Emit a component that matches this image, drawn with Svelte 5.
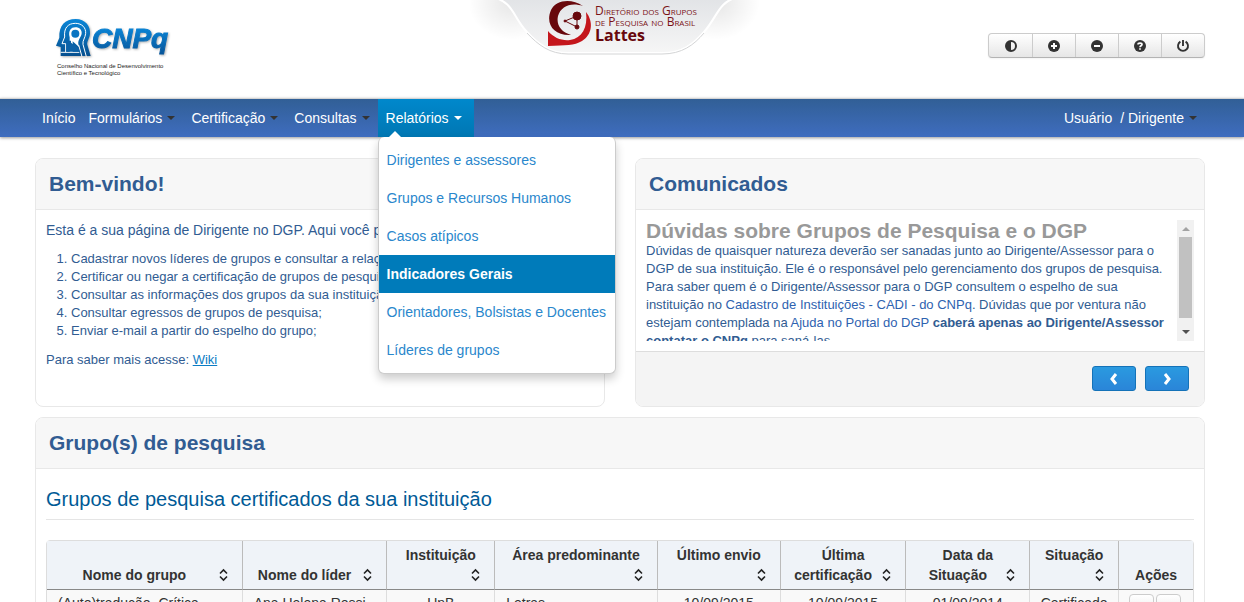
<script lang="ts">
  let openMenu = $state("Relatórios");
  let selected = $state("Indicadores Gerais");

  const menus = ["Formulários", "Certificação", "Consultas", "Relatórios"];

  const reports = [
    "Dirigentes e assessores",
    "Grupos e Recursos Humanos",
    "Casos atípicos",
    "Indicadores Gerais",
    "Orientadores, Bolsistas e Docentes",
    "Líderes de grupos",
  ];

  const tasks = [
    "Cadastrar novos líderes de grupos e consultar a relação de líderes;",
    "Certificar ou negar a certificação de grupos de pesquisa;",
    "Consultar as informações dos grupos da sua instituição;",
    "Consultar egressos de grupos de pesquisa;",
    "Enviar e-mail a partir do espelho do grupo;",
  ];

  const columns = [
    { label: "Nome do grupo", width: 195 },
    { label: "Nome do líder", width: 145 },
    { label: "Instituição", width: 108 },
    { label: "Área predominante", width: 163 },
    { label: "Último envio", width: 123 },
    { label: "Última certificação", width: 126 },
    { label: "Data da Situação", width: 124 },
    { label: "Situação", width: 89 },
  ];

  const tableWidth = 1148;
</script>

<div class="page">
  <header class="top container">
    <a class="cnpq" href="#cnpq" aria-label="CNPq">
      <svg width="136" height="80" viewBox="50 0 136 80">
        <defs>
          <linearGradient id="blue" x1="0" y1="0" x2="0" y2="1">
            <stop offset="0" stop-color="#0a86d8" />
            <stop offset="1" stop-color="#07508f" />
          </linearGradient>
          <linearGradient id="word" gradientUnits="userSpaceOnUse" x1="0" y1="27" x2="0" y2="54">
            <stop offset="0" stop-color="#0a86d8" />
            <stop offset="1" stop-color="#07559a" />
          </linearGradient>
        </defs>
        <g class="shade">
          <g transform="translate(40 0) scale(0.3333)">
            <path
              fill="url(#blue)"
              d="M62 168V141L48 137L58 113C56 77 75 57 107 57C136 57 152 79 150 101C149 115 140 123 142 134L152 168Z"
            />
            <g fill="none" stroke="#fff" stroke-width="3">
              <path d="M77 156V131H66L74 111C71 84 84 70 106 70C127 70 138 84 137 100C136 114 127 121 129 133L139 170" />
              <path d="M62 157H118M116 135L126 170" />
            </g>
            <path fill="#fff" d="M89 156V112C84 92 93 82 106 82C119 82 126 90 125 100C124 112 114 117 115 132L118 142L98 124V156Z" />
            <circle cx="106" cy="101" r="12" fill="#0a75c2" />
            <path fill="#0b62a8" d="M79 122H93V128L116 145L119 155H79Z" />
          </g>
          <text x="92" y="48" class="word">CNPq</text>
        </g>
        <text x="57" y="68" class="tiny">Conselho Nacional de Desenvolvimento</text>
        <text x="57" y="75" class="tiny">Científico e Tecnológico</text>
      </svg>
    </a>

    <a class="lattes" href="#lattes" aria-label="Diretório dos Grupos de Pesquisa no Brasil Lattes">
      <svg width="300" height="70" viewBox="0 0 300 70">
        <defs>
          <linearGradient id="tab" x1="0" y1="0" x2="0" y2="1">
            <stop offset="0" stop-color="#e1e3e6" />
            <stop offset="1" stop-color="#f6f6f6" />
          </linearGradient>
          <radialGradient id="glow">
            <stop offset="0" stop-color="#000" stop-opacity="0.1" />
            <stop offset="1" stop-color="#000" stop-opacity="0" />
          </radialGradient>
        </defs>
        <ellipse cx="42" cy="2" rx="44" ry="38" fill="url(#glow)" />
        <ellipse cx="246" cy="2" rx="44" ry="38" fill="url(#glow)" />
        <path
          d="M22 -3C44 2 42 16 57 32C68 44 80 53 98 53H192C212 53 224 44 234 32C248 16 248 2 268 -3Z"
          fill="url(#tab)"
          stroke="#fff"
          stroke-width="2"
        />
        <path
          d="M57 33C68 45 80 54 98 54H192C212 54 224 45 234 33"
          fill="none"
          stroke="#d4d5d6"
        />
        <path
          fill="#c4161c"
          d="M78 31C84 38 92 41 100 40C112 38 118 28 116 12C124 22 122 35 112 41C104 46 96 45 78 46Z"
        />
        <path
          fill="#68080c"
          d="M113 6C101 -2 86 0 81 10C75 24 84 36 101 35C91 32 86 25 88 16C91 6 101 2 113 6Z"
        />
        <g stroke="#68080c" stroke-width="1">
          <path d="M95 21L107 16L107 27Z" fill="none" />
          <circle cx="107" cy="16" r="4" fill="#68080c" />
          <circle cx="95" cy="21" r="1" fill="#68080c" />
          <circle cx="107" cy="27" r="2" fill="#68080c" />
        </g>
        <text x="125" y="15" class="dir">Diretório dos Grupos</text>
        <text x="125" y="26" class="dir">de Pesquisa no Brasil</text>
        <text x="125" y="41" class="dir-name">Lattes</text>
      </svg>
    </a>

    <div class="tools">
      <button aria-label="Contraste">
        <svg width="14" height="14" viewBox="0 0 14 14">
          <circle cx="7" cy="7" r="5" fill="none" stroke="#333" stroke-width="2" />
          <path d="M7 2A5 5 0 0 0 7 12Z" fill="#333" />
        </svg>
      </button>
      <button aria-label="Aumentar fonte">
        <svg width="14" height="14" viewBox="0 0 14 14">
          <circle cx="7" cy="7" r="6" fill="#333" />
          <path d="M7 4V10M4 7H10" stroke="#fff" stroke-width="2" />
        </svg>
      </button>
      <button aria-label="Diminuir fonte">
        <svg width="14" height="14" viewBox="0 0 14 14">
          <circle cx="7" cy="7" r="6" fill="#333" />
          <path d="M4 7H10" stroke="#fff" stroke-width="2" />
        </svg>
      </button>
      <button aria-label="Ajuda">
        <svg width="14" height="14" viewBox="0 0 14 14">
          <circle cx="7" cy="7" r="6" fill="#333" />
          <path d="M5 5.6C5 3.6 9 3.6 9 5.6C9 6.8 7 6.8 7 8.2M7 9.2V10.8" fill="none" stroke="#fff" stroke-width="1.7" />
        </svg>
      </button>
      <button aria-label="Sair">
        <svg width="14" height="14" viewBox="0 0 14 14">
          <path d="M4.4 2.6A5 5 0 1 0 9.6 2.6M7 1V7" fill="none" stroke="#333" stroke-width="1.9" />
        </svg>
      </button>
    </div>
  </header>

  <nav class="navbar">
    <div class="container bar">
      <a class="home" href="#inicio">Início</a>
      {#each menus as menu}
        <div class="menu">
          <button
            class="menu-btn"
            class:open={openMenu === menu}
            onclick={() => (openMenu = openMenu === menu ? "" : menu)}
          >
            {menu}<span class="caret"></span>
          </button>
          {#if menu === "Relatórios" && openMenu === menu}
            <ul class="dropdown">
              {#each reports as item}
                <li>
                  <a href="#relatorio" class:active={item === selected} onclick={() => (selected = item)}>{item}</a>
                </li>
              {/each}
            </ul>
          {/if}
        </div>
      {/each}
      <div class="user">
        <span>Usuário</span>
        <button class="menu-btn">/ Dirigente<span class="caret"></span></button>
      </div>
    </div>
  </nav>

  <main class="container">
    <div class="row">
      <section class="panel">
        <h2>Bem-vindo!</h2>
        <div class="welcome">
          <p class="lead">Esta é a sua página de Dirigente no DGP. Aqui você poderá:</p>
          <ol>
            {#each tasks as task}
              <li>{task}</li>
            {/each}
          </ol>
          <p>Para saber mais acesse: <a href="#wiki">Wiki</a></p>
        </div>
      </section>

      <section class="panel">
        <h2>Comunicados</h2>
        <div class="news">
          <div class="news-text">
            <h3>Dúvidas sobre Grupos de Pesquisa e o DGP</h3>
            <p>
              Dúvidas de quaisquer natureza deverão ser sanadas junto ao Dirigente/Assessor para o DGP de sua
              instituição. Ele é o responsável pelo gerenciamento dos grupos de pesquisa. Para saber quem é o
              Dirigente/Assessor para o DGP consultem o espelho de sua instituição no
              <a href="#cadi">Cadastro de Instituições - CADI - do CNPq</a>. Dúvidas que por ventura não estejam
              contemplada na <a href="#ajuda">Ajuda no Portal do DGP</a>
              <strong>caberá apenas ao Dirigente/Assessor contatar o CNPq</strong> para saná-las.
            </p>
          </div>
          <div class="scroll" aria-hidden="true">
            <span class="arrow up"></span>
            <span class="thumb"></span>
            <span class="arrow down"></span>
          </div>
        </div>
        <div class="panel-foot">
          <button aria-label="Anterior">
            <svg width="12" height="12" viewBox="0 0 12 12"><path d="M8 1L4 6L8 11" /></svg>
          </button>
          <button aria-label="Próximo">
            <svg width="12" height="12" viewBox="0 0 12 12"><path d="M4 1L8 6L4 11" /></svg>
          </button>
        </div>
      </section>
    </div>

    <section class="panel">
      <h2>Grupo(s) de pesquisa</h2>
      <div class="groups">
        <h3>Grupos de pesquisa certificados da sua instituição</h3>
        <table>
          <colgroup>
            {#each columns as col}
              <col style="width: {(col.width / tableWidth) * 100}%" />
            {/each}
            <col />
          </colgroup>
          <thead>
            <tr>
              {#each columns as col}
                <th>
                  <button class="sort">
                    {col.label}<svg width="9" height="20" viewBox="0 0 9 20">
                      <path d="M1 8.5L4.5 5L8 8.5M1 11.5L4.5 15L8 11.5" />
                    </svg>
                  </button>
                </th>
              {/each}
              <th>Ações</th>
            </tr>
          </thead>
          <tbody>
            <tr>
              <td>(Auto)tradução, Crítica</td>
              <td>Ana Helena Rossi</td>
              <td class="center">UnB</td>
              <td>Letras</td>
              <td class="center">10/09/2015</td>
              <td class="center">10/09/2015</td>
              <td class="center">01/09/2014</td>
              <td class="center">Certificado</td>
              <td class="actions">
                <div>
                  <button aria-label="Visualizar"></button>
                  <button aria-label="Editar"></button>
                </div>
              </td>
            </tr>
          </tbody>
        </table>
      </div>
    </section>
  </main>
</div>

<style>
  :global(html) {
    scrollbar-width: none;
  }

  :global(body) {
    background: #fff;
  }

  .page {
    font-family: "Liberation Sans", Arial, sans-serif;
    font-size: 13px;
    line-height: 18px;
    color: #315c92;
  }

  .page * {
    box-sizing: border-box;
  }

  button {
    font: inherit;
    color: inherit;
    margin: 0;
    padding: 0;
    border: 0;
    background: none;
    cursor: pointer;
  }

  h2,
  h3,
  p {
    margin: 0;
  }

  .container {
    padding: 0 39px 0 35px;
  }

  .top {
    display: grid;
    grid-template-columns: 1fr 300px 1fr;
    align-items: start;
    height: 98px;
  }

  .top svg {
    display: block;
  }

  .cnpq {
    padding-left: 15px;
  }

  .shade {
    filter: drop-shadow(1px 1px 1px rgba(0, 0, 0, 0.3));
  }

  .word {
    font-size: 28px;
    font-weight: bold;
    font-style: italic;
    fill: url(#word);
    stroke: url(#word);
    stroke-width: 1;
  }

  .tiny {
    font-size: 6px;
    fill: #222;
  }

  .dir {
    font-family: "Open Sans", "Noto Sans", sans-serif;
    font-size: 12px;
    font-variant: small-caps;
    fill: #7a1216;
  }

  .dir-name {
    font-family: "Open Sans", "Noto Sans", sans-serif;
    font-size: 16px;
    font-weight: bold;
    fill: #68080c;
  }

  .tools {
    display: flex;
    justify-self: end;
    margin-top: 33px;
    border: 1px solid #ccc;
    border-bottom-color: #b3b3b3;
    border-radius: 4px;
    background: linear-gradient(#fff, #e6e6e6);
    box-shadow: 0 1px 2px rgba(0, 0, 0, 0.05);
  }

  .tools button {
    display: flex;
    align-items: center;
    justify-content: center;
    width: 43px;
    height: 23px;
  }

  .tools button + button {
    border-left: 1px solid #ccc;
  }

  .navbar {
    border-top: 1px solid #d4d4d4;
    background: linear-gradient(#315f96, #3f6dbf);
    box-shadow: 0 1px 3px rgba(0, 0, 0, 0.4);
    font-size: 14px;
    color: #fff;
  }

  .bar {
    display: flex;
    height: 38px;
  }

  .home {
    padding: 0 5px 0 7px;
    line-height: 38px;
    color: #fff;
    text-decoration: none;
  }

  .menu {
    position: relative;
  }

  .menu-btn {
    display: flex;
    align-items: center;
    gap: 5px;
    height: 38px;
    padding: 0 8px;
  }

  .menu-btn.open {
    padding-right: 12px;
    background: linear-gradient(#0088cc, #0077b3);
  }

  .caret {
    border: 4px solid transparent;
    border-top-color: #333;
    border-bottom: 0;
  }

  .open .caret {
    border-top-color: #fff;
  }

  .user {
    display: flex;
    align-items: center;
    margin-left: auto;
  }

  .dropdown {
    position: absolute;
    top: 38px;
    left: 0;
    z-index: 2;
    margin: 0;
    padding: 4px 0;
    list-style: none;
    white-space: nowrap;
    background: #fff;
    border: 1px solid #ccc;
    border-top: 0;
    border-radius: 6px;
    box-shadow: 0 5px 10px rgba(0, 0, 0, 0.2);
  }

  .dropdown::before {
    content: "";
    position: absolute;
    top: -6px;
    left: 10px;
    border: 6px solid transparent;
    border-bottom-color: #fff;
    border-top: 0;
  }

  .dropdown a {
    display: block;
    padding: 0 9px 0 8px;
    line-height: 38px;
    color: #2a87cc;
    text-decoration: none;
  }

  .dropdown a.active {
    color: #fff;
    font-weight: bold;
    background: #007bba;
  }

  main {
    display: flex;
    flex-direction: column;
    gap: 10px;
  }

  main.container {
    padding-top: 21px;
    padding-bottom: 20px;
  }

  .row {
    display: grid;
    grid-template-columns: 1fr 1fr;
    gap: 30px;
  }

  .panel {
    min-width: 0;
    border: 1px solid #e8e8e8;
    border-radius: 8px;
    overflow: hidden;
  }

  h2 {
    padding: 0 13px;
    font-size: 21px;
    line-height: 50px;
    background: #f7f7f7;
    border-bottom: 1px solid #e8e8e8;
  }

  .welcome {
    padding: 10px;
  }

  .lead {
    font-size: 14px;
    line-height: 20px;
    white-space: nowrap;
  }

  ol {
    margin: 10px 0 11px;
    padding-left: 25px;
  }

  .welcome a {
    color: #0b7cc4;
  }

  .news {
    display: flex;
    height: 121px;
    margin: 10px;
  }

  .news-text {
    flex: 1;
    padding-right: 8px;
    overflow: hidden;
  }

  .news h3 {
    font-size: 21px;
    line-height: 22px;
    color: #999;
  }

  .news a {
    color: #2e62b0;
    text-decoration: none;
  }

  .scroll {
    display: flex;
    flex-direction: column;
    align-items: center;
    justify-content: space-between;
    width: 17px;
    padding: 7px 2px;
    background: #f1f1f1;
  }

  .thumb {
    width: 13px;
    height: 81px;
    margin-bottom: 6px;
    background: #c1c1c1;
  }

  .arrow {
    border: 4px solid transparent;
  }

  .up {
    border-bottom-color: #a3a3a3;
    border-top: 0;
  }

  .down {
    border-top-color: #505050;
    border-bottom: 0;
  }

  .panel-foot {
    display: flex;
    justify-content: flex-end;
    gap: 9px;
    padding: 14px 15px 15px;
    background: #f4f4f4;
    border-top: 1px solid #ddd;
  }

  .panel-foot button {
    display: flex;
    align-items: center;
    justify-content: center;
    width: 44px;
    height: 25px;
    border: 1px solid #1472b8;
    border-radius: 3px;
    background: linear-gradient(#2a9ae0, #2a85d8);
  }

  .panel-foot path {
    fill: none;
    stroke: #fff;
    stroke-width: 3;
  }

  .groups {
    padding: 10px;
  }

  .groups h3 {
    margin-bottom: 20px;
    font-size: 20px;
    font-weight: normal;
    line-height: 40px;
    color: #005a96;
    border-bottom: 1px solid #e5e5e5;
  }

  table {
    width: 100%;
    table-layout: fixed;
    border: 1px solid #ddd;
    border-radius: 4px 4px 0 0;
    border-spacing: 0;
    font-size: 14px;
    line-height: 20px;
    color: #333;
  }

  th {
    padding: 4px 12px;
    vertical-align: bottom;
    background: #eff3f8;
    border-bottom: 1px solid #888;
  }

  th + th {
    border-left: 1px solid #bbb;
  }

  th:last-child {
    padding: 4px;
  }

  td {
    padding: 3px 11px;
    vertical-align: top;
    white-space: nowrap;
    background: #f9f9f9;
  }

  td + td {
    border-left: 1px solid #ddd;
  }

  .center {
    padding: 3px;
    text-align: center;
  }

  .sort {
    display: block;
    width: 100%;
    text-align: center;
  }

  .sort svg {
    float: right;
    margin: 0 2px 0 9px;
  }

  .sort path {
    fill: none;
    stroke: #222;
    stroke-width: 1.6;
  }

  .actions {
    padding: 4px 10px;
  }

  .actions div {
    display: flex;
    gap: 2px;
  }

  .actions button {
    width: 25px;
    height: 26px;
    border: 1px solid #ccc;
    border-radius: 4px;
    background: linear-gradient(#fff, #e6e6e6);
  }
</style>
